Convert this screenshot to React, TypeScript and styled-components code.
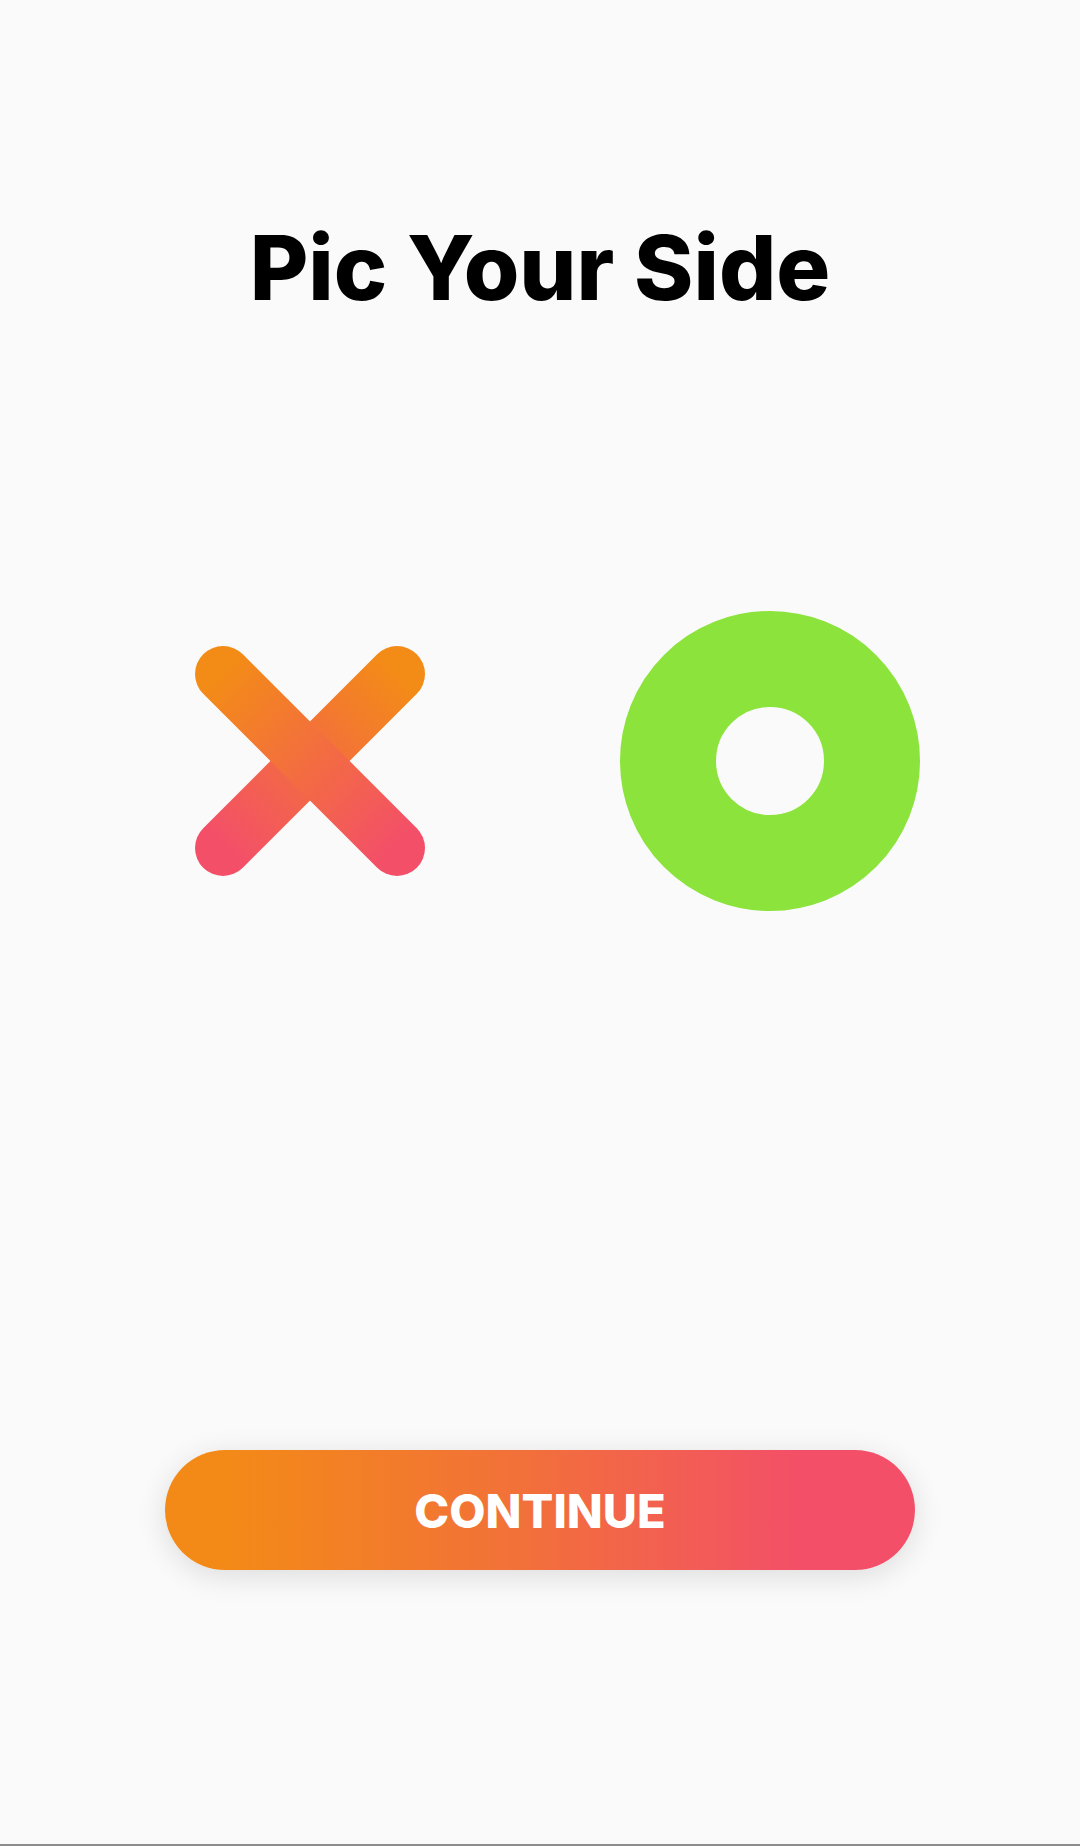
import React from "react";
import styled, { createGlobalStyle } from "styled-components";

const GlobalStyle = createGlobalStyle`
  html, body {
    margin: 0;
    padding: 0;
    background: #fafafa;
  }
  * { box-sizing: border-box; }
`;

const Screen = styled.div`
  min-height: 1846px;
  display: flex;
  flex-direction: column;
  align-items: center;
  background: #fafafa;
  border-bottom: 2px solid #8c8c8c;
  font-family: Inter, "Open Sans", sans-serif;
`;

const Title = styled.h1`
  margin: 208px 0 0;
  height: 120px;
  line-height: 120px;
  font-size: 90px;
  font-weight: 800;
  color: #000;
  letter-spacing: 0px;
`;

const Choices = styled.div`
  margin-top: 283px;
  display: flex;
  gap: 160px;
`;

const Choice = styled.button`
  width: 300px;
  height: 300px;
  padding: 0;
  border: none;
  background: transparent;
  display: flex;
  align-items: center;
  justify-content: center;
  cursor: pointer;
`;

const ContinueButton = styled.button`
  margin-top: 539px;
  width: 750px;
  height: 120px;
  border: none;
  border-radius: 60px;
  background: linear-gradient(90deg, #f38a17 8%, #f2703a 48%, #f34f68 85%);
  box-shadow: 0 6px 30px rgba(0, 0, 0, 0.12);
  color: #fff;
  font-family: Inter, "Open Sans", sans-serif;
  font-size: 47px;
  font-weight: 800;
  letter-spacing: 0px;
  cursor: pointer;
`;

const CrossIcon = () => (
  <svg width="230" height="230" viewBox="0 0 230 230">
    <defs>
      <linearGradient id="gTR" gradientUnits="userSpaceOnUse" x1="202" y1="28" x2="28" y2="202">
        <stop offset="0" stopColor="#f38b17" />
        <stop offset="1" stopColor="#f34f69" />
      </linearGradient>
      <linearGradient id="gTL" gradientUnits="userSpaceOnUse" x1="28" y1="28" x2="202" y2="202">
        <stop offset="0" stopColor="#f38b17" />
        <stop offset="1" stopColor="#f34f69" />
      </linearGradient>
    </defs>
    <line x1="202" y1="28" x2="28" y2="202" stroke="url(#gTR)" strokeWidth="56" strokeLinecap="round" />
    <line x1="28" y1="28" x2="202" y2="202" stroke="url(#gTL)" strokeWidth="56" strokeLinecap="round" />
  </svg>
);

const RingIcon = () => (
  <svg width="300" height="300" viewBox="0 0 300 300">
    <circle cx="150" cy="150" r="102" fill="none" stroke="#8be33b" strokeWidth="96" />
  </svg>
);

export default function App() {
  return (
    <>
      <GlobalStyle />
      <Screen>
        <Title>Pic Your Side</Title>
        <Choices>
          <Choice aria-label="X">
            <CrossIcon />
          </Choice>
          <Choice aria-label="O">
            <RingIcon />
          </Choice>
        </Choices>
        <ContinueButton>CONTINUE</ContinueButton>
      </Screen>
    </>
  );
}
